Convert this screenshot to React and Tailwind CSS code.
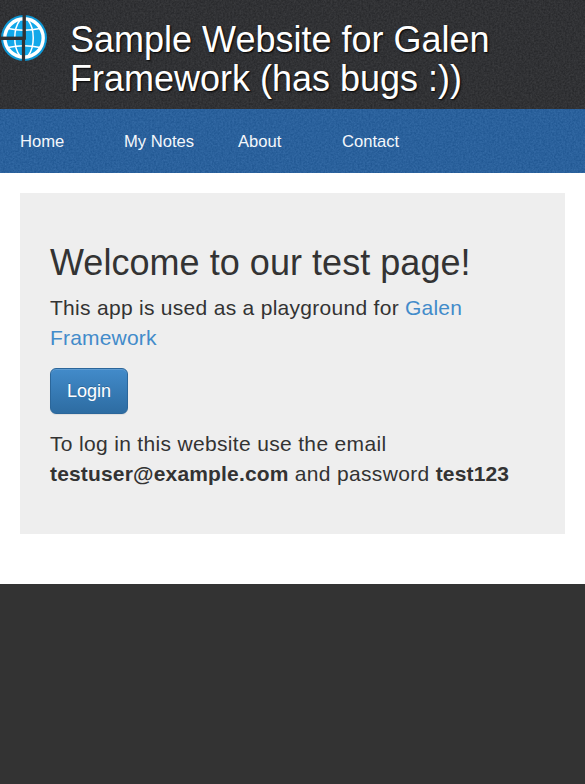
function Noise({ id, opacity }) {
  return (
    <svg className="absolute inset-0 h-full w-full" aria-hidden="true">
      <filter id={id} x="0" y="0" width="100%" height="100%" colorInterpolationFilters="sRGB">
        <feTurbulence type="fractalNoise" baseFrequency="0.55" numOctaves="2" seed="4" />
        <feColorMatrix values="1.6 0 0 0 -0.3  1.6 0 0 0 -0.3  1.6 0 0 0 -0.3  0 0 0 0 1" />
      </filter>
      <rect width="100%" height="100%" filter={`url(#${id})`} opacity={opacity} />
    </svg>
  );
}

function Logo() {
  return (
    <svg width="48" height="48" viewBox="0 0 48 48" className="mt-[14px] shrink-0" fill="none">
      <circle cx="24" cy="24" r="23" fill="#0f98d6" />
      <circle cx="24" cy="24" r="19.2" fill="#12a8ea" stroke="#fff" strokeWidth="3.4" />
      <g stroke="#fff" strokeWidth="1.5">
        <path d="M20 6C13 15 13 33 20 42M28 6C35 15 35 33 28 42" />
        <path d="M8 14.500Q24 18 40 14.500M8 33.500Q24 30 40 33.500" />
      </g>
      <path d="M23.500 24V48" stroke="#303134" strokeWidth="3.2" />
      <path d="M24.200 0V25.500" stroke="#303134" strokeWidth="3.4" />
      <path d="M0 24.300H25.500" stroke="#303134" strokeWidth="3.4" />
    </svg>
  );
}

export default function App() {
  return (
    <div className="flex h-[784px] flex-col bg-[#333] font-['Liberation_Sans',Arial,sans-serif] text-[#333]">
      <header className="relative h-[109px] shrink-0 bg-[#2b2c2f]">
        <Noise id="noise-dark" opacity="0.07" />
        <div className="relative flex items-start">
          <Logo />
          <h1 className="ml-[22px] mt-5 text-[36px] leading-[39px] text-white [text-shadow:1px_1px_2px_#000]">
            Sample Website for Galen
            <br />
            Framework (has bugs :))
          </h1>
        </div>
      </header>
      <nav className="relative h-16 shrink-0 bg-[#245f9f]">
        <Noise id="noise-blue" opacity="0.07" />
        <ul className="relative flex h-full items-center pl-5 pt-[2px] text-[16.6px] text-[#f4f7fb]">
          <li className="w-[104px]">Home</li>
          <li className="w-[114px]">My Notes</li>
          <li className="w-[104px]">About</li>
          <li>Contact</li>
        </ul>
      </nav>
      <main className="h-[411px] shrink-0 bg-white px-5 pt-5">
        <section className="h-[341px] bg-[#eee] px-[30px] pt-[50px] text-[21px] leading-[30px]">
          <h2 className="text-[36px] leading-[40px] tracking-[0.04px]">Welcome to our test page!</h2>
          <p className="mt-[10px] tracking-[0.29px]">
            This app is used as a playground for <a className="text-[#428bca] tracking-[0.18px]">Galen<br />Framework</a>
          </p>
          <button className="mt-[15px] block h-[46px] w-[78px] rounded-[6px] border border-[#2b669a] bg-linear-to-b from-[#428bca] to-[#2d6ca2] text-[18px] leading-6 text-white shadow-[inset_0_1px_0_rgba(255,255,255,0.15),0_1px_1px_rgba(0,0,0,0.075)] [text-shadow:0_-1px_0_rgba(0,0,0,0.2)]">
            Login
          </button>
          <p className="mt-[15px] tracking-[0.33px]">
            To log in this website use the email
            <br />
            <b className="tracking-[0.17px]">testuser@example.com</b> and password <b className="tracking-[0.15px]">test123</b>
          </p>
        </section>
      </main>
    </div>
  );
}
